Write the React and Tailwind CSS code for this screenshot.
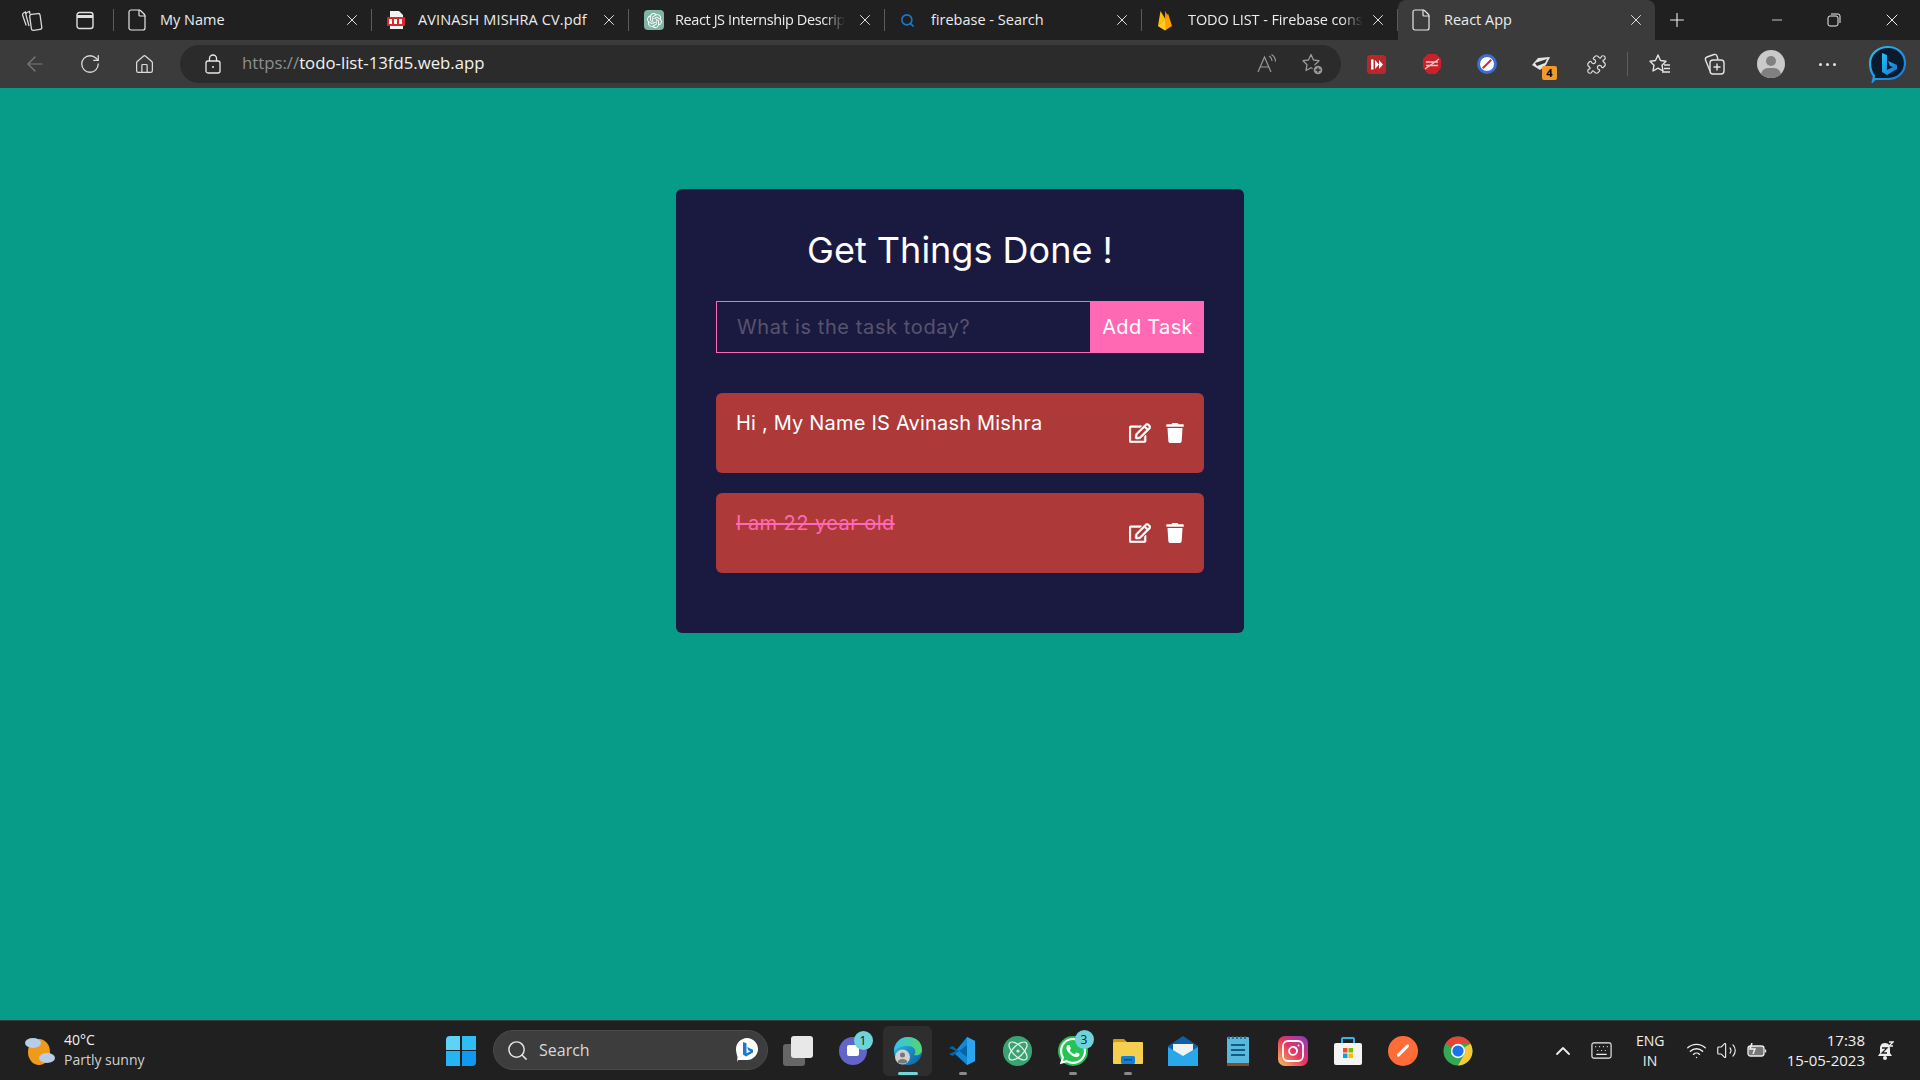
import React from "react";
import { File, Search, X, Plus, Minus, ArrowLeft, RotateCw, Home, Puzzle, ChevronUp, Keyboard, Wifi, Volume2, Atom, Instagram, Star } from "lucide-react";
import { FaTrash, FaRegEdit } from "react-icons/fa";
import { FaWhatsapp } from "react-icons/fa";
import { SiOpenai } from "react-icons/si";

const ui = "font-['Open_Sans','Noto_Sans',sans-serif]";
const poppins = "font-['Inter','Noto_Sans',sans-serif]";

function Collections({ size = 24 }) {
  return (
    <svg width={size} height={size} viewBox="0 0 24 24" fill="none" stroke="#d8d8d8" strokeWidth="1.300">
      <rect x="10.500" y="6" width="10.500" height="16" rx="2" transform="rotate(-8 15 14)" />
      <path d="M10 6 9.500 3.500 7 4.500a2 2 0 0 0-1 2.500l3 11" />
      <path d="M6 6 5.500 4 3.500 5a2 2 0 0 0-.800 2.500l3.500 10" />
    </svg>
  );
}
function CollectionsPlus() {
  return (
    <svg width="24" height="24" viewBox="0 0 24 24" fill="none" stroke="#e4e4e4" strokeWidth="1.400">
      <rect x="8" y="8" width="14" height="14" rx="3" />
      <path d="M15 11.500v7M11.500 15h7" />
      <path d="M8 19 3.500 8a2.500 2.500 0 0 1 1.500-3l7-2.500a2.500 2.500 0 0 1 3 1.500l1 3.500" />
    </svg>
  );
}
function FavStar() {
  return (
    <svg width="24" height="24" viewBox="0 0 24 24" fill="none" stroke="#e4e4e4" strokeWidth="1.400" strokeLinejoin="round">
      <path d="M11 3l2.500 5.500 5.500.7-4 4 1 5.800-5-2.800-5 2.800 1-5.800-4-4 5.500-.7z" />
      <path d="M17 13h6M17 16.500h6M15 20h8" />
    </svg>
  );
}
function AddFavStar() {
  return (
    <svg width="24" height="24" viewBox="0 0 24 24" fill="none" stroke="#9a9a9a" strokeWidth="1.300" strokeLinejoin="round">
      <path d="M11 2.500l2.500 5.500 5.500.7-4 4 1 5.800-5-2.800-5 2.800 1-5.800-4-4 5.500-.7z" />
      <circle cx="18" cy="18" r="5" fill="#9a9a9a" stroke="#2b2b2b" />
      <path d="M18 15.500v5M15.500 18h5" stroke="#2b2b2b" />
    </svg>
  );
}
function LockIcon() {
  return (
    <svg width="16" height="20" viewBox="0 0 16 20" fill="none" stroke="#e8e8e8" strokeWidth="1.300">
      <rect x="1" y="7" width="14" height="12" rx="2" />
      <path d="M4.500 7V4.500a3.500 3.500 0 0 1 7 0V7" />
      <circle cx="8" cy="13" r="1" fill="#e8e8e8" stroke="none" />
    </svg>
  );
}
function TabsIcon() {
  return (
    <svg width="18" height="19" viewBox="0 0 18 19" fill="none" stroke="#e0e0e0" strokeWidth="1.400">
      <rect x="1" y="1.500" width="16" height="16" rx="2.500" />
      <path d="M1 5.500h16" strokeWidth="3" />
    </svg>
  );
}
function Doc() {
  return <File size={24} strokeWidth={1.200} color="#e6e6e6" className="-ml-[4px]" />;
}
function PdfIcon() {
  return (
    <svg className="-ml-[1px]" width="20" height="20" viewBox="0 0 20 20">
      <path d="M4 1h9l4 4v14H4z" fill="#f2f2f2" />
      <rect x="1" y="7" width="18" height="9" rx="1" fill="#d8292f" />
      <rect x="3" y="9" width="3" height="5" fill="#fff" />
      <rect x="8" y="9" width="3" height="5" fill="#fff" />
      <rect x="13" y="9" width="3" height="5" fill="#fff" />
    </svg>
  );
}
function Flame() {
  return (
    <svg width="16" height="21" viewBox="0 0 16 21">
      <path d="M1 16 3.500 1 8 8.500z" fill="#ffc400" />
      <path d="M1 16 8 8.500 11 3.500l4 12.500-7 4.500z" fill="#ffa000" />
      <path d="M8 1l3 5-3 3z" fill="#f58b00" />
      <path d="M1 16 8 8.500l.500 12z" fill="#ffca28" />
    </svg>
  );
}
function BingLogo({ size = 38 }) {
  return (
    <svg width={size} height={size} viewBox="0 0 38 38">
      <defs>
        <linearGradient id="bingg" x1="0" y1="0" x2="1" y2="1">
          <stop offset="0" stopColor="#27c1f0" />
          <stop offset="1" stopColor="#1673d8" />
        </linearGradient>
      </defs>
      <path d="M19 2c10 0 17 7 17 16s-7 16-17 16H6l-2 2 1-5C2 27 1 23 1 18 1 9 9 2 19 2z" fill="#0c1a2e" stroke="url(#bingg)" strokeWidth="2.200" />
      <path d="M13 8l5 2v15l6-3-3-1-2-5 9 4v4l-10 6-5-3z" fill="url(#bingg)" />
    </svg>
  );
}
function MiniBing() {
  return (
    <svg width="24" height="26" viewBox="0 0 24 26">
      <path d="M12 1c6 0 11 5 11 11s-5 11-11 11H3l-1 2 .500-5C1.500 17 1 14 1 12 1 6 6 1 12 1z" fill="#fff" />
      <path d="M8 5l3.500 1.300v10l4-2-2-.800-1.500-3.500 6 2.800v2.700l-7 4-3-2z" fill="#1b78d6" />
    </svg>
  );
}
function EdgeIcon() {
  return (
    <svg width="30" height="30" viewBox="0 0 30 30">
      <defs>
        <linearGradient id="edg" x1="0" y1="0" x2="1" y2="1">
          <stop offset="0" stopColor="#2fc6e8" />
          <stop offset="1" stopColor="#0c59a4" />
        </linearGradient>
        <linearGradient id="edg2" x1="0" y1="0" x2="1" y2="0">
          <stop offset="0" stopColor="#35c1f1" />
          <stop offset="1" stopColor="#54d66b" />
        </linearGradient>
      </defs>
      <circle cx="15" cy="15" r="14" fill="url(#edg)" />
      <path d="M1 15C2 6 8 1 15 1c8 0 14 5 14 13 0 4-4 6-8 5 3-3 1-9-6-9-6 0-9 1-14 5z" fill="url(#edg2)" />
      <circle cx="9.500" cy="21" r="7.500" fill="#d0d0d0" />
      <circle cx="9.500" cy="19" r="2.500" fill="#777" />
      <path d="M4.500 26c1-4 9-4 10 0-2 2-8 2-10 0z" fill="#777" />
    </svg>
  );
}
function Vscode() {
  return (
    <svg className="-ml-[3px]" width="30" height="30" viewBox="0 0 30 30">
      <path d="M21 1l8 4v20l-8 4L8 17z" fill="#0f8ad9" />
      <path d="M21 1v28l8-4V5z" fill="#2aa5ee" />
      <path d="M21 21 6.500 10 3 12l7 3-7 3 3.500 2L21 9z" fill="#0065a9" />
    </svg>
  );
}
function Chrome() {
  return (
    <svg width="30" height="30" viewBox="0 0 30 30">
      <circle cx="15" cy="15" r="14.500" fill="#34a853" />
      <path d="M15 .5a14.500 14.500 0 0 1 12.600 7.300H15a7.200 7.200 0 0 0-6.300 3.600L2.500 7.600A14.500 14.500 0 0 1 15 .5z" fill="#e94335" />
      <path d="M27.600 7.800A14.500 14.500 0 0 1 15 29.500l6.200-10.800a7.200 7.200 0 0 0 0-7.300z" fill="#fcc934" />
      <circle cx="15" cy="15" r="7.200" fill="#fff" />
      <circle cx="15" cy="15" r="5.600" fill="#1a73e8" />
    </svg>
  );
}
function Store() {
  return (
    <svg width="30" height="30" viewBox="0 0 30 30" fill="none">
      <path d="M9 7V3a1 1 0 0 1 1-1h10a1 1 0 0 1 1 1v4" stroke="#31b6e8" strokeWidth="2" />
      <rect x="1" y="7" width="28" height="22" rx="2" fill="#f4f4f4" />
      <rect x="10" y="12" width="4.500" height="4.500" fill="#f25022" />
      <rect x="15.500" y="12" width="4.500" height="4.500" fill="#7fba00" />
      <rect x="10" y="17.500" width="4.500" height="4.500" fill="#00a4ef" />
      <rect x="15.500" y="17.500" width="4.500" height="4.500" fill="#ffb900" />
    </svg>
  );
}
function Folder() {
  return (
    <svg width="30" height="30" viewBox="0 0 30 30">
      <path d="M0 4a1 1 0 0 1 1-1h10l3 3h-14z" fill="#d8960c" />
      <rect x="0" y="6" width="30" height="22" rx="1" fill="#f6cf4e" />
      <rect x="8" y="20" width="14" height="8" rx="1.500" fill="#1482d0" />
      <rect x="11" y="23" width="8" height="1.500" fill="#0b4f8a" />
    </svg>
  );
}
function Mail() {
  return (
    <svg width="30" height="30" viewBox="0 0 30 30">
      <path d="M0 10 15 0l15 10v4H0z" fill="#0f5ea8" />
      <path d="M5 8h20v8l-10 6-10-6z" fill="#f2f2f2" />
      <path d="M0 11l15 9 15-9v19H0z" fill="#28a8ea" />
    </svg>
  );
}
function Notepad() {
  return (
    <svg width="22" height="30" viewBox="0 0 22 30">
      <rect x="0" y="1" width="22" height="28" rx="1" fill="#5ab8dc" />
      <rect x="0" y="27" width="22" height="3" fill="#8a4b1d" />
      <rect x="4" y="8" width="14" height="2" fill="#0f5c86" />
      <rect x="4" y="13" width="14" height="2" fill="#0f5c86" />
      <rect x="4" y="18" width="14" height="2" fill="#0f5c86" />
      <path d="M2 0v3M6 0v3M10 0v3M14 0v3M18 0v3" stroke="#1c5f80" strokeWidth="1.500" />
    </svg>
  );
}
function Windows() {
  return (
    <div className="grid grid-cols-2 gap-[1.500px] w-[30px] h-[30px]">
      <div className="bg-[#5ed3f8] rounded-tl-sm" />
      <div className="bg-[#2fbdf5]" />
      <div className="bg-[#27b4f4]" />
      <div className="bg-[#0f9af0] rounded-br-sm" />
    </div>
  );
}
function Weather() {
  return (
    <svg width="32" height="30" viewBox="0 0 32 30">
      <ellipse cx="15" cy="16" rx="11" ry="13" fill="#f09a1c" />
      <ellipse cx="9" cy="7" rx="8" ry="5" fill="#b7cdea" />
      <ellipse cx="23" cy="22" rx="8" ry="5" fill="#b7cdea" />
    </svg>
  );
}
function Badge({ n }) {
  return (
    <span className={`absolute -top-[6px] right-[-6px] w-[19px] h-[19px] rounded-full bg-[#6fd3dc] text-[#102020] text-[12px] leading-[19px] text-center ${ui}`}>
      {n}
    </span>
  );
}

function Tab({ title, icon, fade, active, width, tracking }) {
  return (
    <div style={{ width }} className={`relative flex items-center shrink-0 ${active ? "h-[40px] bg-[#3b3b3b] rounded-t-lg" : "h-[22px] border-r border-[#5a5a5a]"}`}>
      <div className="w-[46px] pl-[15px] flex justify-start shrink-0">{icon}</div>
      <div className={`whitespace-nowrap text-[14.500px] text-[#ececec] ${tracking || ""} ${fade ? "[mask-image:linear-gradient(to_right,#000_88%,transparent)]" : ""}`}>
        {title}
      </div>
      <X size={18} strokeWidth={1.300} color="#e6e6e6" className="ml-auto mr-[10px] shrink-0" />
    </div>
  );
}

function Slot({ children, dot, active }) {
  return (
    <div className={`relative h-[50px] flex items-center justify-center shrink-0 ${active ? "w-[49px] bg-[#2e2e2e] rounded-md mx-[3px]" : "w-[55px]"}`}>
      {children}
      {dot && <span className="absolute bottom-[1px] w-[8px] h-[3px] rounded-full bg-[#8a8a8a]" />}
      {active && <span className="absolute bottom-[1px] w-[20px] h-[3px] rounded-full bg-[#76d4dc]" />}
    </div>
  );
}

function ToolBtn({ children, className = "" }) {
  return <div className={`relative w-[55px] h-[40px] flex items-center justify-center shrink-0 ${className}`}>{children}</div>;
}

function TodoItem({ text, done }) {
  return (
    <div className="h-[80px] rounded-md bg-[#ad3939] pl-[20px] pr-[19px] flex items-center">
      <p className={`self-start pt-[16px] text-[20px] leading-[28px] ${poppins} ${done ? "line-through text-[#ff69b4] tracking-[0.45px]" : "text-white tracking-[0.2px]"}`}>
        {text}
      </p>
      <div className="ml-auto flex items-center gap-[14px] text-white text-[20px]">
        <FaRegEdit className="w-[22px] h-[20px] stroke-[12px]" />
        <FaTrash className="w-[20px] h-[20px]" />
      </div>
    </div>
  );
}

export default function App() {
  return (
    <div className={`h-screen w-full flex flex-col overflow-hidden bg-[#069c88] ${ui}`}>
      <header className="h-[40px] bg-[#202020] flex items-center shrink-0">
        <div className="w-[114px] h-[22px] border-r border-[#5a5a5a] flex items-center shrink-0">
          <div className="w-[24px] ml-[20px]"><Collections /></div>
          <div className="ml-[32px]"><TabsIcon /></div>
        </div>
        <Tab width={258} title="My Name" icon={<Doc />} />
        <Tab width={257} title="AVINASH MISHRA CV.pdf" tracking="tracking-[0.12px]" icon={<PdfIcon />} />
        <Tab
          width={256}
          title="React JS Internship Descrip"
          fade
          tracking="tracking-[-0.4px]"
          icon={
            <span className="w-[20px] h-[20px] rounded-[4px] bg-[#7fb5a5] flex items-center justify-center text-white text-[15px]">
              <SiOpenai />
            </span>
          }
        />
        <Tab width={257} title="firebase - Search" icon={<Search size={15} color="#1b78d0" strokeWidth={2.500} />} />
        <Tab width={256} title="TODO LIST - Firebase cons" fade tracking="tracking-[-0.1px]" icon={<Flame />} />
        <Tab width={257} title="React App" icon={<Doc />} active />
        <Plus size={22} strokeWidth={1.200} color="#eee" className="ml-[11px]" />
        <div className="ml-auto flex items-center pr-[18px]">
          <Minus size={16} strokeWidth={1.200} color="#eee" />
          <svg className="ml-[42px]" width="14" height="14" viewBox="0 0 14 14" fill="none" stroke="#eee" strokeWidth="1">
            <rect x="1" y="3" width="10" height="10" rx="2" />
            <path d="M4 1h7a2 2 0 0 1 2 2v7" />
          </svg>
          <X size={20} strokeWidth={1.200} color="#eee" className="ml-[41px]" />
        </div>
      </header>

      <nav className="h-[48px] bg-[#3b3b3b] flex items-center pl-[7px] shrink-0 text-[#dcdcdc]">
        <ToolBtn><ArrowLeft size={24} strokeWidth={1.200} color="#7c7c7c" /></ToolBtn>
        <ToolBtn><RotateCw size={22} strokeWidth={1.400} /></ToolBtn>
        <ToolBtn><Home size={21} strokeWidth={1.400} /></ToolBtn>
        <div className="ml-[8px] w-[1161px] h-[38px] rounded-full bg-[#2b2b2b] flex items-center pl-[25px] pr-[17px] shrink-0">
          <LockIcon />
          <span className="ml-[21px] -mt-[2px] text-[16.750px] text-[#f2f2f2]">
            <span className="text-[#8f8f8f]">https://</span>todo-list-13fd5.web.app
          </span>
          <span className="ml-auto flex items-center">
            <svg width="22" height="22" viewBox="0 0 22 22" fill="none" stroke="#9a9a9a" strokeWidth="1.200">
              <path d="M2 19 8.500 4 15 19M4.500 14h8" />
              <path d="M13 3c2 1 3 3 3 5M15.500 1.500c2.500 1.500 4 4 4 7" />
            </svg>
          </span>
          <span className="ml-[22px]"><AddFavStar /></span>
        </div>
        <div className="ml-[8px] flex items-center">
          <ToolBtn>
            <svg width="19" height="19" viewBox="0 0 19 19">
              <rect x="0" y="0" width="19" height="19" rx="3.500" fill="#b8272b" />
              <path d="M4 4.500h2.500v10H4zM8 5l4 4.500-4 4.500zM12 5l4 4.500-4 4.500z" fill="#fff" />
            </svg>
          </ToolBtn>
          <ToolBtn>
            <svg width="20" height="22" viewBox="0 0 20 22">
              <path d="M6 1h8l5 5v9l-5 6H6l-5-6V6z" fill="#c92029" />
              <path d="M3 16 17 6M4 9h12M4 12.500h12" stroke="#f4c8c8" strokeWidth="1.300" />
            </svg>
          </ToolBtn>
          <ToolBtn>
            <span className="w-[20px] h-[20px] rounded-full bg-white border-[3px] border-[#3a6fd8] flex items-center justify-center">
              <span className="block w-[12px] h-[2px] bg-[#d8262c] -rotate-45" />
            </span>
          </ToolBtn>
          <ToolBtn>
            <svg width="22" height="18" viewBox="0 0 22 18">
              <path d="M1 10 7 3l12-1-4 8-6 5z" fill="#e5e5e5" />
              <path d="M4 8l12-4-2 4-8 3z" fill="#333" />
            </svg>
            <span className="absolute right-[12px] bottom-[4px] w-[15px] h-[14px] rounded-[2px] bg-[#f09a2a] text-black text-[11px] font-bold leading-[14px] text-center">4</span>
          </ToolBtn>
          <ToolBtn><Puzzle size={21} strokeWidth={1.400} /></ToolBtn>
          <div className="w-[1px] h-[24px] bg-[#5e5e5e] ml-[3px] mr-[3px]" />
          <ToolBtn><FavStar /></ToolBtn>
          <ToolBtn><CollectionsPlus /></ToolBtn>
          <ToolBtn className="ml-[2px]">
            <span className="relative w-[28px] h-[28px] rounded-full bg-[#c9c9c9] overflow-hidden block">
              <span className="absolute left-[9px] top-[6px] w-[10px] h-[10px] rounded-full bg-[#808080]" />
              <span className="absolute left-[4px] top-[18px] w-[20px] h-[14px] rounded-full bg-[#808080]" />
            </span>
          </ToolBtn>
          <ToolBtn className="ml-[2px]">
            <span className="flex gap-[4px]">
              <span className="w-[3px] h-[3px] rounded-full bg-[#e4e4e4]" />
              <span className="w-[3px] h-[3px] rounded-full bg-[#e4e4e4]" />
              <span className="w-[3px] h-[3px] rounded-full bg-[#e4e4e4]" />
            </span>
          </ToolBtn>
          <ToolBtn className="ml-[5px]"><BingLogo /></ToolBtn>
        </div>
      </nav>

      <main className="flex-1 min-h-0">
        <section className="mx-auto mt-[101px] w-[568px] h-[444px] bg-[#1a1a40] rounded-md px-[40px] pt-[36px]">
          <h1 className={`text-center text-white text-[36px] leading-[50px] ${poppins}`}>Get Things Done !</h1>
          <div className="mt-[26px] h-[52px] flex">
            <div className={`flex-1 border border-[#ff69b4] flex items-center pl-[20px] text-[20px] tracking-[0.6px] text-[#57536e] ${poppins}`}>
              What is the task today?
            </div>
            <button className={`w-[113px] bg-[#ff69b4] text-white text-[20px] tracking-[0.3px] ${poppins}`}>Add Task</button>
          </div>
          <div className="mt-[40px] flex flex-col gap-[20px]">
            <TodoItem text="Hi , My Name IS Avinash Mishra" />
            <TodoItem text="I am 22 year old" done />
          </div>
        </section>
      </main>

      <footer className="h-[60px] bg-[#202020] border-t border-[#3a3a3a] flex items-center shrink-0 text-[#f0f0f0]">
        <div className="w-[446px] pl-[24px] flex items-center shrink-0">
          <Weather />
          <div className="ml-[8px] -mt-[2px] text-[14px] leading-[20px]">
            <div>40°C</div>
            <div className="text-[#d0d0d0]">Partly sunny</div>
          </div>
        </div>
        <Windows />
        <div className="ml-[17px] -mt-[1px] w-[275px] h-[40px] rounded-full bg-[#3d3d3d] border border-[#4a4a4a] flex items-center pl-[12px] pr-[8px] shrink-0">
          <Search size={23} strokeWidth={1.500} color="#e6e6e6" />
          <span className="ml-[10px] text-[16px] text-[#d8d8d8]">Search</span>
          <span className="ml-auto"><MiniBing /></span>
        </div>
        <div className="ml-[2px] flex items-center shrink-0">
          <Slot>
            <span className="relative w-[30px] h-[30px] block">
              <span className="absolute left-0 bottom-0 w-[22px] h-[22px] rounded-[3px] bg-[#666]" />
              <span className="absolute right-0 top-0 w-[22px] h-[22px] rounded-[3px] bg-[#e8e8e8]" />
            </span>
          </Slot>
          <Slot>
            <span className="relative w-[28px] h-[28px] rounded-full bg-[#6264c8] flex items-center justify-center">
              <span className="w-[12px] h-[11px] rounded-[2px] bg-white" />
              <Badge n="1" />
            </span>
          </Slot>
          <Slot active><EdgeIcon /></Slot>
          <Slot dot><Vscode /></Slot>
          <Slot>
            <span className="w-[29px] h-[30px] rounded-full bg-[#3aa373] flex items-center justify-center">
              <Atom size={24} strokeWidth={1.200} color="#e8f5ea" />
            </span>
          </Slot>
          <Slot dot>
            <span className="relative text-white">
              <span className="w-[30px] h-[30px] rounded-full bg-[#25c353] flex items-center justify-center text-[30px]"><FaWhatsapp /></span>
              <Badge n="3" />
            </span>
          </Slot>
          <Slot dot><Folder /></Slot>
          <Slot><Mail /></Slot>
          <Slot><Notepad /></Slot>
          <Slot>
            <span className="w-[30px] h-[30px] rounded-[7px] bg-[linear-gradient(45deg,#fdc259,#e8345f_50%,#8a3ac8)] flex items-center justify-center">
              <Instagram size={24} strokeWidth={1.800} color="#fff" />
            </span>
          </Slot>
          <Slot><Store /></Slot>
          <Slot>
            <span className="w-[30px] h-[30px] rounded-full bg-[#ff6c37] flex items-center justify-center">
              <span className="block w-[16px] h-[3px] rounded-full bg-white -rotate-45" />
            </span>
          </Slot>
          <Slot><Chrome /></Slot>
        </div>
        <div className="ml-auto flex items-center pr-[26px]">
          <ChevronUp size={24} strokeWidth={1.800} color="#eee" />
          <Keyboard size={23} strokeWidth={1.200} color="#eee" className="ml-[15px]" />
          <div className="ml-[23px] w-[28px] text-center text-[14px] leading-[20px]">
            <div>ENG</div>
            <div>IN</div>
          </div>
          <Wifi size={21} strokeWidth={1.600} color="#eee" className="ml-[22px]" />
          <Volume2 size={21} strokeWidth={1.300} color="#eee" className="ml-[9px]" />
          <svg className="ml-[10px]" width="20" height="16" viewBox="0 0 20 16" fill="none" stroke="#eee" strokeWidth="1.300">
            <rect x="1" y="3" width="16" height="10" rx="2.500" fill="#777" />
            <path d="M18.500 6.500v3" />
            <path d="M5 0 3 6h5l-2 5" strokeWidth="1.500" />
          </svg>
          <div className="ml-[15px] -mt-[2px] w-[83px] text-right text-[15px] leading-[20px]">
            <div>17:38</div>
            <div>15-05-2023</div>
          </div>
          <svg className="ml-[11px]" width="18" height="20" viewBox="0 0 18 20">
            <path d="M9 2c4 0 5 3 5 6v4l2 3H2l2-3V8c0-3 1-6 5-6z" fill="#eee" />
            <circle cx="9" cy="17" r="2" fill="#eee" />
            <path d="M6 7h5l-5 5h5" stroke="#202020" strokeWidth="1.300" fill="none" />
            <path d="M13 1h4l-4 4h4" stroke="#eee" strokeWidth="1.300" fill="none" />
          </svg>
        </div>
      </footer>
    </div>
  );
}
